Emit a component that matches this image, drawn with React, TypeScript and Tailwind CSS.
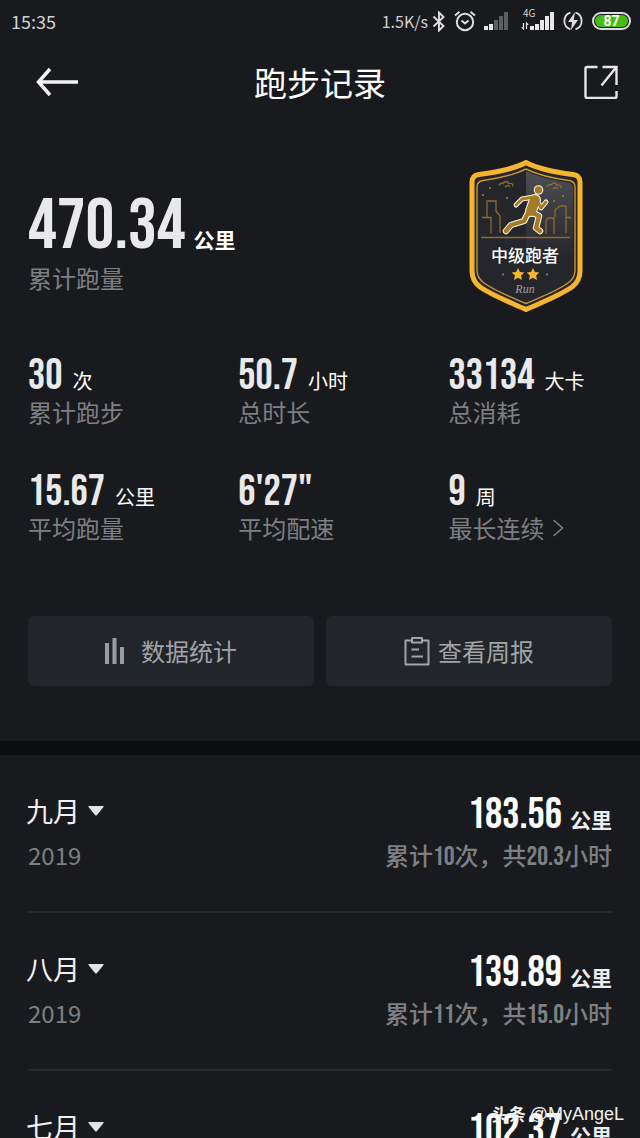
import React from 'react';

const NUM = "font-['Bebas_Neue','Roboto_Condensed','Liberation_Sans_Narrow',sans-serif] font-normal";

interface Stat {
  value: string;
  unit?: string;
  label: string;
  hasMore?: boolean;
}

interface MonthRecord {
  month: string;
  distance: string;
  year?: string;
  runs?: string;
  hours?: string;
}

const STATS: Stat[] = [
  { value: '30', unit: '次', label: '累计跑步' },
  { value: '50.7', unit: '小时', label: '总时长' },
  { value: '33134', unit: '大卡', label: '总消耗' },
  { value: '15.67', unit: '公里', label: '平均跑量' },
  { value: '6\'27"', label: '平均配速' },
  { value: '9', unit: '周', label: '最长连续', hasMore: true },
];

const MONTHS: MonthRecord[] = [
  { month: '九月', year: '2019', distance: '183.56', runs: '10', hours: '20.3' },
  { month: '八月', year: '2019', distance: '139.89', runs: '11', hours: '15.0' },
  { month: '七月', distance: '102.37' },
];

// limbs of the runner on the badge, drawn twice: light outline, then gold fill
const ARMS = 'M65 37L53 39 47 45M67 38L72 48 77 42';
const LEGS = 'M62 52L70 56 67 68 71 71M60 51L55 61 42 65 37 71';

const SignalIcon: React.FC<{ active: number }> = ({ active }) => (
  <svg className="h-[18px] w-[25px]" viewBox="0 0 25 18" aria-hidden="true">
    {[4, 6, 10, 14, 18].map((h, i) => (
      <rect key={h} x={i * 5} y={18 - h} width="4" height={h} fill={i < active ? '#e8e8ea' : '#5d5e61'} />
    ))}
  </svg>
);

const StatusBar: React.FC = () => (
  <div className="flex h-[42px] shrink-0 items-center justify-between pr-[9px] pl-[11px] text-[18px] text-[#d2d2d4]">
    <span>15:35</span>
    <div className="flex items-center">
      <span className="text-[16px]">1.5K/s</span>
      <svg className="ml-1 h-[21px] w-[14px]" viewBox="0 0 14 21" fill="none" stroke="#dedee0" strokeWidth="1.9" aria-hidden="true">
        <path d="M1.5 5.5l10 9.5L7 19.5v-18L11.5 6l-10 9.5" />
      </svg>
      <svg className="ml-2 h-[22px] w-[22px]" viewBox="0 0 22 22" fill="none" stroke="#dedee0" strokeWidth="2" aria-hidden="true">
        <circle cx="11" cy="12" r="8.2" />
        <path d="M7.5 10.5l3.5 3 3.5-3M1 5.5L5.5 1.8M21 5.5l-4.5-3.7" />
      </svg>
      <span className="ml-2"><SignalIcon active={2} /></span>
      <div className="relative ml-3 flex items-end">
        <span className="absolute -top-1 left-[2px] text-[10px] leading-[10px]">4G</span>
        <svg className="h-2 w-[9px]" viewBox="0 0 9 8" fill="none" stroke="#dedee0" strokeWidth="1.2" aria-hidden="true">
          <path d="M2.5 1v6L.8 5.2M5.5 7V1l1.7 1.8" />
        </svg>
        <SignalIcon active={5} />
      </div>
      <svg className="ml-2 h-5 w-5" viewBox="0 0 20 20" fill="none" stroke="#dedee0" strokeWidth="1.8" aria-hidden="true">
        <path d="M7.5 1.7a8.7 8.7 0 0 0 0 16.6M12.5 1.7a8.7 8.7 0 0 1 0 16.6" />
        <path d="M12 1L5 11h4l-1 8 7-10h-4.3z" fill="#dedee0" stroke="none" />
      </svg>
      <div className="ml-[9px] flex h-[18px] w-[39px] rounded-full border-2 border-[#dedee0] p-px">
        <span className="flex flex-1 items-center justify-center rounded-full bg-[#45bd12] font-['Roboto',sans-serif] text-[14px] leading-3 font-bold text-white">87</span>
      </div>
    </div>
  </div>
);

const Header: React.FC = () => (
  <header className="grid h-20 shrink-0 grid-cols-[1fr_auto_1fr] items-center px-[22px]">
    <button type="button" aria-label="返回" className="ml-3.5 w-[42px]">
      <svg className="h-[30px] w-[42px]" viewBox="0 0 42 30" fill="none" stroke="#f4f4f5" strokeWidth="3.5" aria-hidden="true">
        <path d="M42 15H2.5M14 2L2.5 15 14 28" />
      </svg>
    </button>
    <h1 className="text-[33px] leading-10 text-white">跑步记录</h1>
    <button type="button" aria-label="分享" className="justify-self-end">
      <svg className="h-[34px] w-[34px]" viewBox="0 0 34 34" fill="none" stroke="#e6e6e8" strokeWidth="2.4" aria-hidden="true">
        <path d="M13.5 2H3a1.5 1.5 0 0 0-1.5 1.5v28A1.5 1.5 0 0 0 3 33h28a1.5 1.5 0 0 0 1.5-1.5V26M18.5 2H32.5V20M32 2.500L17.500 20.500" />
      </svg>
    </button>
  </header>
);

const Badge: React.FC = () => (
  <svg className="h-[152px] w-[114px] shrink-0" viewBox="0 0 114 152" role="img" aria-label="中级跑者">
    <defs>
      <linearGradient id="shine" x1="0" y1="0" x2="0" y2="1">
        <stop offset="0" stopColor="#4d4d54" />
        <stop offset="1" stopColor="#25262c" />
      </linearGradient>
    </defs>
    <path d="M57 2.500C71 10 92 13 104 14.500Q111 15.500 111 22V111Q111 121 103 127C90 136 71 143 57 149.500 43 143 24 136 11 127Q3 121 3 111V22Q3 15.500 10 14.500C22 13 43 10 57 2.500z" fill="#25262c" stroke="#f6b52f" strokeWidth="5" strokeLinejoin="round" />
    <path d="M57 11C71 18 89 21 99 22.500Q104 23 104 28V100H57z" fill="url(#shine)" />
    <path d="M57 9C71 16 89 19 100 20.500Q106 21.500 106 27V110Q106 118 99 123C88 131 70 138 57 143.500 44 138 26 131 15 123Q8 118 8 110V27Q8 21.500 14 20.500C25 19 43 16 57 9z" fill="none" stroke="#c99530" strokeWidth="1.4" />
    <g fill="none" stroke="#8b6b29" strokeWidth="1.3">
      <path d="M12 77.500h89M13 57.500h9v16M18 57.500V41h9v10l4 5v17M77 74V62q0-4 4-4h4v16M86 57V50l5-4h6v27M97 57.500h5" />
      <path d="M30 25.500q1-3 4-2 3-4 6 0 4-1 4 3M36 27q3-3 5 0M78 27q1-3 4-2 3-4 6 0 4-1 4 3M84 29q3-3 5 0" />
    </g>
    <g fill="#a77e2a">
      <circle cx="14" cy="35" r="1" /><circle cx="21" cy="28" r="1" /><circle cx="38" cy="38" r="1" /><circle cx="85" cy="41" r="1" /><circle cx="94" cy="36" r="1" />
    </g>
    <g fill="none" stroke="#fdf3dc" strokeLinecap="round" strokeLinejoin="round">
      <path d={ARMS} strokeWidth="5" />
      <path d={LEGS} strokeWidth="6.5" />
      <path d="M66 40L62 51" strokeWidth="12" />
      <circle cx="69.500" cy="30" r="4.8" fill="#fdf3dc" stroke="none" />
    </g>
    <g fill="none" stroke="#a67b28" strokeLinecap="round" strokeLinejoin="round">
      <path d={ARMS} strokeWidth="2.8" />
      <path d={LEGS} strokeWidth="4.3" />
      <path d="M66 40L62 51" strokeWidth="9.8" />
      <circle cx="69.500" cy="30" r="3.7" fill="#a67b28" stroke="none" />
    </g>
    <text x="56" y="102" textAnchor="middle" fill="#fff" fontSize="17" fontWeight="500" fontFamily="'Noto Sans CJK SC', sans-serif">中级跑者</text>
    <path d="M49 108l1.900 4 4.400.5-3.200 3 .9 4.500-4-2.200-4 2.200.9-4.500-3.200-3 4.400-.5zM64 108l1.900 4 4.400.5-3.200 3 .9 4.500-4-2.200-4 2.200.9-4.500-3.200-3 4.400-.5z" fill="#f8b62d" />
    <circle cx="34" cy="114.500" r="1" fill="#8d8d92" />
    <circle cx="78" cy="114.500" r="1" fill="#8d8d92" />
    <text x="56" y="133" textAnchor="middle" fill="#a0a0a6" fontSize="12" fontStyle="italic" fontFamily="'Liberation Serif', serif">Run</text>
  </svg>
);

const StatItem: React.FC<{ stat: Stat }> = ({ stat }) => (
  <div>
    <div className="flex h-10 items-baseline gap-2.5 leading-10">
      <span className={`${NUM} text-[43px] text-[#e9e9eb]`}>{stat.value}</span>
      {stat.unit && <span className="text-[20px] text-white">{stat.unit}</span>}
    </div>
    <div className="flex items-center text-[24px] leading-8 text-[#7e7f83]">
      {stat.label}
      {stat.hasMore && (
        <svg className="ml-2 h-[18px] w-3" viewBox="0 0 12 18" fill="none" stroke="currentColor" strokeWidth="1.6" aria-hidden="true">
          <path d="M1.5 1l9 8-9 8" />
        </svg>
      )}
    </div>
  </div>
);

const MonthRow: React.FC<{ record: MonthRecord }> = ({ record }) => (
  <li className="flex justify-between border-b-2 border-[#28292c] pt-9 pb-10">
    <div>
      <button type="button" className="-ml-0.5 flex items-center gap-2 text-[27px] leading-10 text-[#f2f2f4]">
        {record.month}
        <svg className="h-[10px] w-4" viewBox="0 0 16 10" fill="#e2e2e5" aria-hidden="true">
          <path d="M1 0h14q1 0 .5 1L9 9q-1 1-2 0L.5 1Q0 0 1 0z" />
        </svg>
      </button>
      {record.year && <p className="mt-2 text-[24px] leading-8 text-[#7e7f83]">{record.year}</p>}
    </div>
    <div className="text-right">
      <div className="flex h-12 items-baseline justify-end gap-2 leading-12">
        <span className={`${NUM} text-[43px] text-white`}>{record.distance}</span>
        <span className="text-[21px] font-bold text-[#ececee]">公里</span>
      </div>
      {record.runs && (
        <p className="h-8 text-[24px] leading-8 font-medium text-[#7e7f83]">
          累计<span className={`${NUM} text-[27px]`}>{record.runs}</span>次，共<span className={`${NUM} text-[27px]`}>{record.hours}</span>小时
        </p>
      )}
    </div>
  </li>
);

export default function App() {
  return (
    <div className="relative flex h-screen flex-col overflow-hidden bg-[#191a1d] font-['Noto_Sans_CJK_SC',sans-serif]">
      <StatusBar />
      <Header />

      <section className="shrink-0 px-7 pt-[38px] pb-[55px]">
        <div className="flex items-start justify-between pr-[29px]">
          <div className="pt-8">
            <div className="flex h-[70px] items-baseline gap-2 leading-[70px]">
              <span className={`${NUM} text-[72px] text-[#e9e9eb]`}>470.34</span>
              <span className="text-[21px] font-bold text-white">公里</span>
            </div>
            <p className="text-[24px] leading-8 text-[#7e7f83]">累计跑量</p>
          </div>
          <Badge />
        </div>

        <div className="mt-11 grid grid-cols-[36fr_36fr_28fr] gap-y-11">
          {STATS.map((stat) => (
            <StatItem key={stat.label} stat={stat} />
          ))}
        </div>

        <div className="mt-18 grid grid-cols-2 gap-3">
          <button type="button" className="flex h-[70px] items-center justify-center gap-4 rounded-md bg-[#222529] text-[24px] text-[#a3a4a8]">
            <svg className="h-[26px] w-5" viewBox="0 0 20 26" fill="#9a9b9f" aria-hidden="true">
              <path d="M0 5h4v21H0zM7.5 0h4v26h-4zM15 9h4v17h-4z" />
            </svg>
            数据统计
          </button>
          <button type="button" className="flex h-[70px] items-center justify-center gap-2 rounded-md bg-[#222529] text-[24px] text-[#a3a4a8]">
            <svg className="h-[30px] w-[26px]" viewBox="0 0 26 30" fill="none" stroke="#a3a4a8" strokeWidth="2" strokeLinejoin="round" aria-hidden="true">
              <path d="M8 4.5H1.5V28.5h23V4.5H18M8 2h10v4.5H8zM7.5 13.5H15M7.5 20.5H19" />
            </svg>
            查看周报
          </button>
        </div>
      </section>

      <div className="h-[14px] shrink-0 bg-[#0c0d11]" />

      <ul className="min-h-0 flex-1 overflow-hidden px-7">
        {MONTHS.map((record) => (
          <MonthRow key={record.month} record={record} />
        ))}
      </ul>

      <div className="absolute right-4 bottom-3 flex items-center gap-1 text-[17px] leading-6 text-[#f0f0f2]">
        <span className="font-bold">头条</span>
        <span className="font-['Liberation_Sans',sans-serif] text-[18px]">@MyAngeL</span>
      </div>
    </div>
  );
}
